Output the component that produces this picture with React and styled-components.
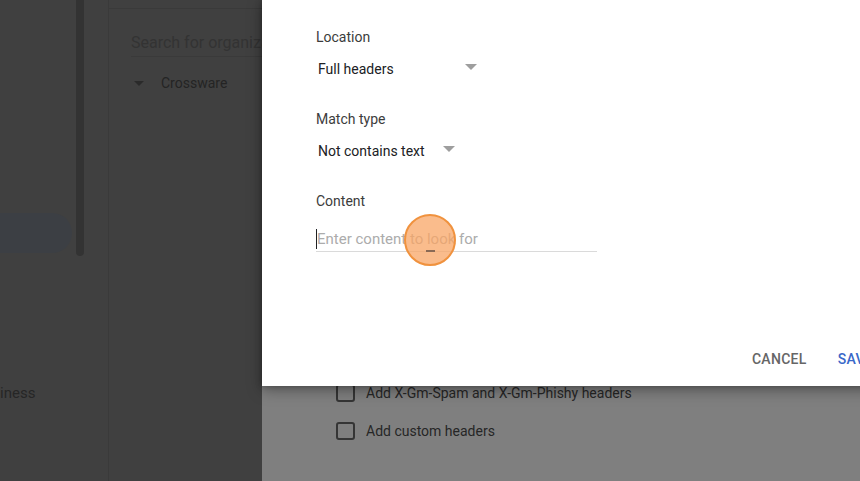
import React from "react";
import styled, { createGlobalStyle } from "styled-components";

const GlobalStyle = createGlobalStyle`
  html, body {
    margin: 0;
    padding: 0;
    background: #404040;
  }
  body {
    font-family: Roboto, "Liberation Sans", Arial, sans-serif;
  }
`;

const Page = styled.div`
  width: 860px;
  height: 481px;
  display: grid;
  grid-template-columns: 262px 1fr;
  grid-template-rows: 386px 1fr;
  overflow: hidden;
  position: relative;
`;

/* ---------- dimmed left side ---------- */

const Backdrop = styled.div`
  grid-row: 1 / 3;
  grid-column: 1;
  display: flex;
  background: #404040;
  overflow: hidden;
`;

const Nav = styled.div`
  width: 108px;
  flex-shrink: 0;
  display: flex;
`;

const NavList = styled.div`
  width: 76px;
  display: flex;
  flex-direction: column;
`;

const NavText = styled.div`
  font-size: 15px;
  line-height: 20px;
  color: #262626;
  white-space: nowrap;
  margin-top: ${(p) => p.$top}px;
  margin-left: ${(p) => p.$left || 0}px;
`;

const NavPill = styled.div`
  margin-top: 11px;
  height: 40px;
  width: 72px;
  background: #3c3f44;
  border-radius: 0 20px 20px 0;
`;

const Scrollbar = styled.div`
  width: 8px;
  height: 256px;
  background: #333333;
  border-radius: 0 0 4px 4px;
`;

const OrgColumn = styled.div`
  flex: 1;
  border-left: 1px solid #3a3a3a;
  display: flex;
  flex-direction: column;
  min-width: 0;
`;

const OrgHeader = styled.div`
  height: 8px;
  border-bottom: 1px solid #3a3a3a;
`;

const OrgSearch = styled.div`
  margin: 24px 0 0 22px;
  padding-bottom: 3px;
  border-bottom: 1px solid #3a3a3a;
  font-size: 16px;
  line-height: 20px;
  color: #333333;
  white-space: nowrap;
  overflow: hidden;
`;

const TreeRow = styled.div`
  display: flex;
  align-items: center;
  margin: 16px 0 0 25px;
  gap: 17px;
  font-size: 14px;
  line-height: 20px;
  color: #242424;
`;

const TreeArrow = styled.span`
  width: 0;
  height: 0;
  border-left: 5px solid transparent;
  border-right: 5px solid transparent;
  border-top: 5px solid #2a2a2a;
`;

/* ---------- dialog ---------- */

const Dialog = styled.div`
  grid-row: 1;
  grid-column: 2;
  width: 640px;
  background: #ffffff;
  box-shadow: 0 4px 14px rgba(0, 0, 0, 0.35), 0 0 6px rgba(0, 0, 0, 0.25);
  z-index: 2;
  display: flex;
  flex-direction: column;
  padding: 27px 0 9px 54px;
  box-sizing: border-box;
`;

const Field = styled.div`
  display: flex;
  flex-direction: column;
  margin-bottom: 30px;
`;

const Label = styled.div`
  font-size: 14px;
  line-height: 20px;
  color: #3c3c3c;
`;

const Select = styled.div`
  margin-top: 12px;
  width: ${(p) => p.$width}px;
  display: flex;
  align-items: center;
  justify-content: space-between;
  padding: 0 3px 0 2px;
  box-sizing: border-box;
  font-size: 14px;
  line-height: 20px;
  color: #202124;
`;

const Caret = styled.span`
  width: 0;
  height: 0;
  margin-bottom: 4px;
  border-left: 6px solid transparent;
  border-right: 6px solid transparent;
  border-top: 6px solid #9e9e9e;
`;

const InputWrap = styled.div`
  position: relative;
  margin-top: 18px;
  width: 281px;
  padding-bottom: 2px;
  border-bottom: 1px solid #dadada;
`;

const Input = styled.div`
  font-size: 15px;
  line-height: 20px;
  color: #acacac;
  border-left: 1px solid #202124;
  white-space: nowrap;
`;

const ClickMark = styled.div`
  position: absolute;
  left: 88px;
  top: -15px;
  width: 52px;
  height: 52px;
  border-radius: 50%;
  background: rgba(248, 165, 102, 0.75);
  border: 2px solid #f0923e;
  box-sizing: border-box;

  &::after {
    content: "";
    position: absolute;
    left: 20px;
    bottom: 12px;
    width: 9px;
    height: 2px;
    background: #8a6a55;
  }
`;

const Actions = styled.div`
  margin-top: auto;
  display: flex;
  justify-content: flex-end;
  gap: 15px;
  padding-right: 21px;
`;

const Button = styled.button`
  height: 36px;
  padding: 0 8px;
  border: none;
  background: transparent;
  font-family: Roboto, "Liberation Sans", Arial, sans-serif;
  font-size: 14px;
  font-weight: 500;
  letter-spacing: 0.3px;
  text-transform: uppercase;
  color: ${(p) => (p.$primary ? "#3a68c9" : "#666666")};
  cursor: pointer;
`;

/* ---------- dimmed bottom band ---------- */

const Band = styled.div`
  grid-row: 2;
  grid-column: 2;
  background: #7f7f7f;
  display: flex;
  flex-direction: column;
  gap: 20px;
  padding: 0 0 0 74px;
  margin-top: -2px;
  z-index: 1;
`;

const CheckRow = styled.label`
  display: flex;
  align-items: center;
  gap: 11px;
  font-size: 14px;
  line-height: 18px;
  color: #262626;
`;

const Box = styled.span`
  width: 19px;
  height: 18px;
  border: 2px solid #353535;
  border-radius: 3px;
  box-sizing: border-box;
`;

export default function App() {
  return (
    <>
      <GlobalStyle />
      <Page>
        <Backdrop>
          <Nav>
            <NavList>
              <NavText $top={182} $left={-8}>s</NavText>
              <NavPill />
              <NavText $top={130}>iness</NavText>
            </NavList>
            <Scrollbar />
          </Nav>
          <OrgColumn>
            <OrgHeader />
            <OrgSearch>Search for organizational units</OrgSearch>
            <TreeRow>
              <TreeArrow />
              Crossware
            </TreeRow>
          </OrgColumn>
        </Backdrop>

        <Dialog>
          <Field>
            <Label>Location</Label>
            <Select $width={164}>
              Full headers
              <Caret />
            </Select>
          </Field>
          <Field>
            <Label>Match type</Label>
            <Select $width={142}>
              Not contains text
              <Caret />
            </Select>
          </Field>
          <Field>
            <Label>Content</Label>
            <InputWrap>
              <Input>Enter content to look for</Input>
              <ClickMark />
            </InputWrap>
          </Field>
          <Actions>
            <Button>Cancel</Button>
            <Button $primary>Save</Button>
          </Actions>
        </Dialog>

        <Band>
          <CheckRow>
            <Box />
            Add X-Gm-Spam and X-Gm-Phishy headers
          </CheckRow>
          <CheckRow>
            <Box />
            Add custom headers
          </CheckRow>
        </Band>
      </Page>
    </>
  );
}
